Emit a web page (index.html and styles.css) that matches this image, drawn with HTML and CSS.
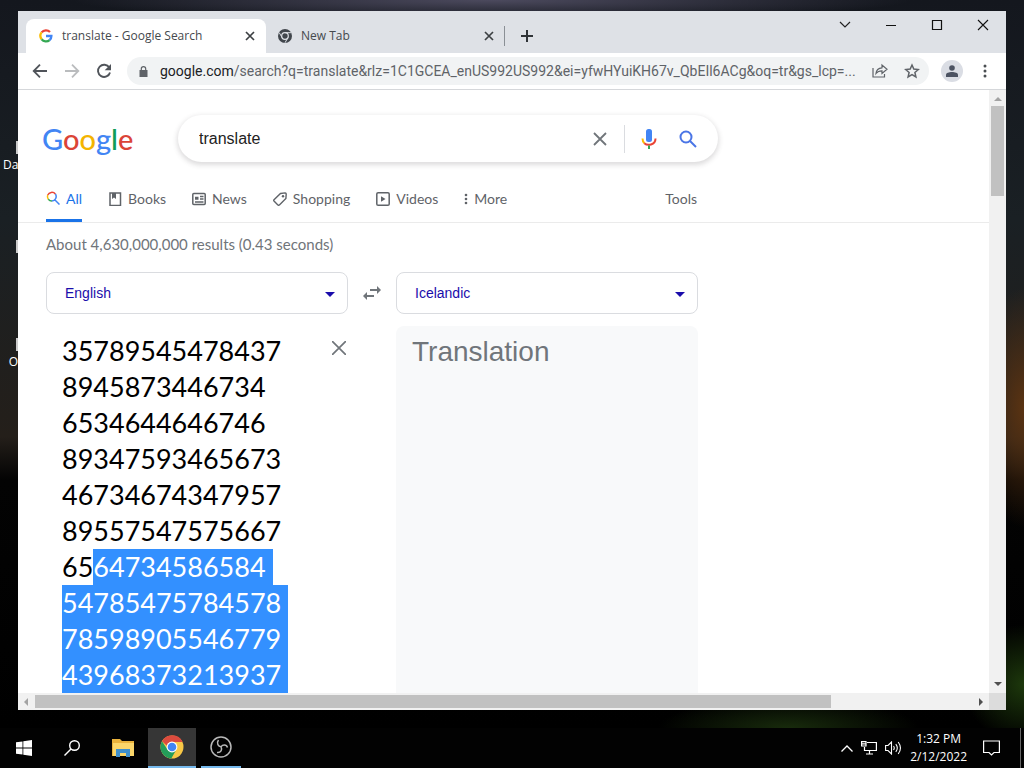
FILE: index.html
```html
<!DOCTYPE html>
<html lang="en">
<head>
<meta charset="utf-8">
<title>translate - Google Search</title>
<link rel="stylesheet" href="styles.css">
</head>
<body>
<main class="desktop">
  <span class="shortcut shortcut-a">Da</span>
  <span class="shortcut shortcut-b"></span>
  <span class="shortcut shortcut-c">O</span>

  <section class="window">
    <header class="tabstrip">
      <div class="tab tab-active">
        <svg class="favicon" viewBox="0 0 14 14" fill="none" stroke-width="2.3"><path d="M2.6 3.4A5.6 5.6 0 0 1 11 3" stroke="#ea4335"/><path d="M2.6 10.2A5.6 5.6 0 0 1 2.6 3.4" stroke="#fbbc05"/><path d="M2.6 10.2A5.6 5.6 0 0 0 10.6 11.1" stroke="#34a853"/><path d="M7 7H12.4A5.5 5.5 0 0 1 10.6 11.1" stroke="#4285f4"/></svg>
        <span class="tab-title">translate - Google Search</span>
        <button class="tab-close" aria-label="Close tab"><svg viewBox="0 0 10 10"><path d="M1 1l8 8M9 1L1 9" stroke="#3c4043" stroke-width="1.7"/></svg></button>
      </div>
      <div class="tab">
        <svg class="favicon" viewBox="0 0 14 14"><circle cx="7" cy="7" r="7" fill="#41464c"/><circle cx="7" cy="7" r="3.3" fill="none" stroke="#dee1e6" stroke-width="1.2"/><path d="M7 3.7H13M4.1 8.6L1.2 3.6M9.9 8.6L7 13.8" stroke="#dee1e6" stroke-width="1"/></svg>
        <span class="tab-title">New Tab</span>
        <button class="tab-close" aria-label="Close tab"><svg viewBox="0 0 10 10"><path d="M1 1l8 8M9 1L1 9" stroke="#3c4043" stroke-width="1.7"/></svg></button>
      </div>
      <button class="new-tab" aria-label="New tab"><svg viewBox="0 0 12 12"><path d="M6 0v12M0 6h12" stroke="#2f3337" stroke-width="2"/></svg></button>
      <div class="caption">
        <button aria-label="Search tabs"><svg viewBox="0 0 12 12"><path d="M1 3l5 5 5-5" fill="none" stroke="#222" stroke-width="1.2"/></svg></button>
        <button aria-label="Minimize"><svg viewBox="0 0 12 12"><path d="M1 6.5h10" stroke="#111"/></svg></button>
        <button aria-label="Maximize"><svg viewBox="0 0 12 12"><path d="M1.5 1.5h9v9h-9z" fill="none" stroke="#111" stroke-width="1.2"/></svg></button>
        <button aria-label="Close"><svg viewBox="0 0 12 12"><path d="M1 1l10 10M11 1L1 11" stroke="#111" stroke-width="1.1"/></svg></button>
      </div>
    </header>

    <div class="toolbar">
      <button class="nav" aria-label="Back"><svg viewBox="0 0 16 16"><path d="M15 8H2M8 1.7L1.7 8 8 14.3" fill="none" stroke="#50545a" stroke-width="1.8"/></svg></button>
      <button class="nav" aria-label="Forward"><svg viewBox="0 0 16 16"><path d="M1 8h13M8 1.7L14.3 8 8 14.3" fill="none" stroke="#babcbe" stroke-width="1.8"/></svg></button>
      <button class="nav" aria-label="Reload"><svg viewBox="0 0 16 16"><path d="M13.3 4.6A6.1 6.1 0 1 0 14 9.4" fill="none" stroke="#50545a" stroke-width="1.9"/><path d="M15 1v6.3H8.7z" fill="#50545a"/></svg></button>
      <div class="omnibox">
        <svg class="lock" viewBox="0 0 8 11"><path d="M0 4h8v7H0z" fill="#5f6368"/><path d="M1.8 4V2.8a2.2 2.2 0 0 1 4.4 0V4" fill="none" stroke="#5f6368" stroke-width="1.2"/></svg>
        <span class="url"><b>google.com</b>/search?q=translate&amp;rlz=1C1GCEA_enUS992US992&amp;ei=yfwHYuiKH67v_QbEIl6ACg&amp;oq=tr&amp;gs_lcp=...</span>
        <button aria-label="Share"><svg viewBox="0 0 16 16" fill="none" stroke="#5f6368" stroke-width="1.2"><path d="M1 5v9h11.5v-3"/><path d="M4 10.5C4.3 6.7 6.5 5 10 4.8V2l5 4.3-5 4.2V7.8C7.4 7.8 5.5 8.5 4 10.5z"/></svg></button>
        <button aria-label="Bookmark"><svg viewBox="0 0 16 16"><path d="M8 2l1.8 4.1 4.5.4-3.4 3 1 4.4L8 11.6l-3.9 2.3 1-4.4-3.4-3 4.5-.4z" fill="none" stroke="#5f6368" stroke-width="1.5"/></svg></button>
      </div>
      <button class="avatar" aria-label="Profile"><svg viewBox="0 0 12 12"><circle cx="6" cy="3" r="2.8" fill="#4c5362"/><path d="M0 12V9.8C0 7.9 3 7 6 7s6 .9 6 2.8V12z" fill="#4c5362"/></svg></button>
      <button class="menu" aria-label="Menu"><svg viewBox="0 0 4 14" fill="#4a4e52"><circle cx="2" cy="2" r="1.5"/><circle cx="2" cy="7" r="1.5"/><circle cx="2" cy="12" r="1.5"/></svg></button>
    </div>

    <div class="viewport">
      <div class="page">
        <div class="search-row">
          <a class="logo" href="#"><span class="c-blue">G</span><span class="c-red">o</span><span class="c-yellow">o</span><span class="c-blue">g</span><span class="c-green">l</span><span class="c-red">e</span></a>
          <form class="search" onsubmit="return false">
            <input type="text" value="translate" aria-label="Search">
            <button class="clear" type="button" aria-label="Clear"><svg viewBox="0 0 14 14"><path d="M1 1l12 12M13 1L1 13" stroke="#70757a" stroke-width="1.8"/></svg></button>
            <button class="mic" type="button" aria-label="Search by voice"><svg viewBox="0 0 16 20"><rect x="5" y="0" width="6" height="13" rx="2.5" fill="#4285f4"/><path d="M1.5 9.5c0 2 .8 3.7 2 4.8" stroke="#fbbc04" stroke-width="2" fill="none"/><path d="M3.3 14.2c3 2.7 11.2 2.3 11.2-4.7" stroke="#ea4335" stroke-width="2" fill="none"/><path d="M8 16.5V20" stroke="#34a853" stroke-width="2"/></svg></button>
            <button class="go" type="submit" aria-label="Search"><svg viewBox="0 0 18 18" fill="none" stroke="#4a75e6" stroke-width="2"><circle cx="7" cy="7" r="5.5"/><path d="M11 11l6 6"/></svg></button>
          </form>
        </div>

        <nav class="modes">
          <a class="mode mode-on" href="#"><svg viewBox="0 0 14 14" fill="none" stroke-width="1.5"><path d="M1.7 4A4.6 4.6 0 0 1 9.4 3" stroke="#ea4335"/><path d="M2.3 8.3A4.6 4.6 0 0 1 1.7 4" stroke="#fbbc04"/><path d="M2.3 8.3A4.6 4.6 0 0 0 6 10.1" stroke="#34a853"/><path d="M9.4 3A4.6 4.6 0 0 1 6 10.1M9 9l4.5 4.5" stroke="#4285f4"/></svg>All</a>
          <a class="mode" href="#"><svg viewBox="0 0 14 14"><path d="M2 1h10.5v12.5H2z" fill="none" stroke="#5f6368" stroke-width="1.5"/><path d="M4 1h4v6L6 5.5 4 7z" fill="#5f6368"/></svg>Books</a>
          <a class="mode" href="#"><svg viewBox="0 0 14 14" fill="none" stroke="#5f6368" stroke-width="1.5"><rect x=".8" y="1.5" width="12.4" height="11" rx="1"/><path d="M3 5.500h3.500M3 7h3.500M8 4.500h3.500M8 7h3.500M3 10h8.500" stroke-width="1.4"/></svg>News</a>
          <a class="mode" href="#"><svg viewBox="0 0 14 14"><path d="M7.500 1.500L12.200.9Q13.200.9 13.200 2L12.900 6.500 6.400 13Q5.600 13.600 4.900 13L1 9Q.4 8.300 1 7.700z" fill="none" stroke="#5f6368" stroke-width="1.4"/><circle cx="10" cy="4.200" r="1.200" fill="#5f6368"/></svg>Shopping</a>
          <a class="mode" href="#"><svg viewBox="0 0 14 14"><rect x=".8" y=".8" width="12.4" height="12.4" rx="1.3" fill="none" stroke="#5f6368" stroke-width="1.5"/><path d="M5 4.200v5.600L9.500 7z" fill="#5f6368"/></svg>Videos</a>
          <a class="mode mode-more" href="#"><svg viewBox="0 0 4 12" fill="#5f6368"><circle cx="2" cy="2" r="1.3"/><circle cx="2" cy="6" r="1.3"/><circle cx="2" cy="10" r="1.3"/></svg>More</a>
          <a class="mode mode-tools" href="#">Tools</a>
        </nav>

        <p class="stats">About 4,630,000,000 results (0.43 seconds)</p>

        <div class="translate">
          <div class="picker">
            <select aria-label="Source language"><option>English</option></select>
            <svg viewBox="0 0 10 5"><path d="M0 0h10L5 5z" fill="#1a0dab"/></svg>
          </div>
          <button class="swap" aria-label="Swap languages"><svg viewBox="0 0 18 14" fill="#70757a"><path d="M7 3h7V0l4 4-4 4V5H7zM11 9H4V6l-4 4 4 4v-3h7z"/></svg></button>
          <div class="picker">
            <select aria-label="Target language"><option>Icelandic</option></select>
            <svg viewBox="0 0 10 5"><path d="M0 0h10L5 5z" fill="#1a0dab"/></svg>
          </div>
          <div class="source">
            <textarea id="source" aria-label="Source text" spellcheck="false">35789545478437
8945873446734
6534644646746
89347593465673
46734674347957
89557547575667
6564734586584
54785475784578
78598905546779
43968373213937 </textarea>
            <button class="wipe" aria-label="Clear source text"><svg viewBox="0 0 14 14"><path d="M0 0l14 14M14 0L0 14" stroke="#70757a" stroke-width="1.7"/></svg></button>
          </div>
          <div class="target">Translation</div>
        </div>
      </div>

      <div class="vbar"><svg class="arrow" viewBox="0 0 8 4"><path d="M0 4h8L4 0z" fill="#a3a3a3"/></svg><i class="vthumb"></i><svg class="arrow arrow-end" viewBox="0 0 8 4"><path d="M0 0h8L4 4z" fill="#505050"/></svg></div>
      <div class="hbar"><svg class="arrow-h" viewBox="0 0 4 8"><path d="M4 0v8L0 4z" fill="#a3a3a3"/></svg><i class="hthumb"></i><svg class="arrow-h arrow-h-end" viewBox="0 0 4 8"><path d="M0 0v8l4-4z" fill="#505050"/></svg></div>
      <div class="corner"></div>
    </div>
  </section>
</main>

<footer class="taskbar">
  <button class="task" aria-label="Start"><svg width="16" height="16" viewBox="0 0 16 16" fill="#fff"><path d="M0 2.300L6.500 1.400v6.200H0zM7.300 1.300L16 0v7.600H7.300zM0 8.400h6.500v6.200L0 13.700zM7.300 8.400H16V16l-8.700-1.300z"/></svg></button>
  <button class="task" aria-label="Search"><svg width="16" height="16" viewBox="0 0 16 16" fill="none" stroke="#fff" stroke-width="1.4"><circle cx="10.5" cy="5.5" r="4.8"/><path d="M7 9L.5 15.5"/></svg></button>
  <button class="task task-wide" aria-label="File Explorer"><svg width="22" height="18" viewBox="0 0 22 18"><path d="M0 0h8l2 2h12v15H0z" fill="#e9b23c"/><path d="M1 4h21v13H1z" fill="#fbd66a"/><path d="M4 10h14v8h-4v-4H8v4H4z" fill="#3f8fcb"/></svg></button>
  <button class="task task-current" aria-label="Google Chrome"><svg width="24" height="24" viewBox="0 0 24 24"><circle cx="12" cy="12" r="11.5" fill="#f9c846"/><path d="M2 6.300A11.500 11.500 0 0 1 22.700 7H12a5 5 0 0 0-4.800 4z" fill="#dc4b3e"/><path d="M2 6.300A11.500 11.500 0 0 0 11.300 23.500L16.400 14.500 12 17 7.700 15z" fill="#249d5a"/><circle cx="12" cy="12" r="5.4" fill="#fff"/><circle cx="12" cy="12" r="4.3" fill="#4285f4"/></svg></button>
  <button class="task task-open" aria-label="OBS Studio"><svg width="22" height="22" viewBox="0 0 22 22" fill="none" stroke="#b8b8b8" stroke-width="1.5"><circle cx="11" cy="11" r="10"/><path d="M8.500 4C6 7.500 8.500 10.500 11 10.800M17.500 11.500C16.500 8 12.500 8.500 11 10.800M7 16.500C11 17 12.500 13.500 11 10.800"/></svg></button>
  <div class="tray">
    <svg width="12" height="7" viewBox="0 0 12 7"><path d="M.5 6.500L6 1l5.500 5.500" fill="none" stroke="#fff" stroke-width="1.3"/></svg>
    <svg width="16" height="14" viewBox="0 0 16 14" fill="none" stroke="#fff" stroke-width="1.2"><path d="M6 1.500h9.400v8H3.500V6M5 13h7M8.500 9.500V13M.6.600h4.400v4.400H.600zM1 2.800h4"/></svg>
    <svg width="17" height="14" viewBox="0 0 17 14" fill="none" stroke="#fff" stroke-width="1.1"><path d="M.6 4.500h2.400l3.500-3.500v12L3 9.500H.6zM8.500 5q1.500 2 0 4M10.800 3.200q3 3.800 0 7.600M13.200 1q4.500 6 0 12"/></svg>
    <time class="clock">1:32 PM<br>2/12/2022</time>
    <svg width="17" height="17" viewBox="0 0 17 17" fill="none" stroke="#fff" stroke-width="1.2"><path d="M.6 1h15.800v11.500H11L8.500 15 6 12.500H.6z"/></svg>
  </div>
</footer>
<script src="select.js"></script>
</body>
</html>
```
FILE: select.js
```js
const source = document.getElementById("source");
const start = source.value.indexOf("64734586584");
source.focus({ preventScroll: true });
source.setSelectionRange(start, source.value.length, "backward");
source.scrollTop = 0;
```
FILE: styles.css
```css
* { box-sizing: border-box; }
html, body { height: 100%; margin: 0; }
body {
  display: flex;
  flex-direction: column;
  overflow: hidden;
  background: #000;
  font-family: Lato, "Liberation Sans", sans-serif;
  font-size: 14px;
}
button {
  display: flex;
  align-items: center;
  justify-content: center;
  padding: 0;
  border: 0;
  background: none;
}
svg { flex: none; display: block; }
a { color: inherit; text-decoration: none; }

.desktop {
  position: relative;
  flex: 1;
  min-height: 0;
  display: flex;
  padding: 11px 18px 18px;
  background:
    radial-gradient(ellipse 60px 60px at 100% 94%, #1d380c, transparent),
    radial-gradient(ellipse 130px 30px at 77% 100%, #182b0c, transparent),
    radial-gradient(ellipse 420px 20px at 48% 0, #4c4a5e, transparent),
    radial-gradient(ellipse 50px 120px at 100% 56%, #5a3312, transparent),
    linear-gradient(#14171e, #1a2024 30%, #241f1a 60%, #030303 66%, #000);
}
.shortcut {
  position: absolute;
  left: 3px;
  width: 15px;
  height: 34px;
  padding-top: 16px;
  color: #fff;
  font: 12px/16px "Open Sans", sans-serif;
  text-align: right;
  background: linear-gradient(#ccc, #ccc) right top / 2px 13px no-repeat;
}
.shortcut-a { top: 141px; }
.shortcut-b { top: 240px; }
.shortcut-c { top: 338px; }

.window {
  position: relative;
  flex: 1;
  min-width: 0;
  display: flex;
  flex-direction: column;
  background: #fff;
}

.tabstrip {
  display: flex;
  height: 42px;
  padding: 8px 0 0 8px;
  background: #dee1e6;
  font: 12px/16px "Open Sans", "Noto Sans", sans-serif;
  color: #45494d;
}
.tab {
  display: flex;
  align-items: center;
  gap: 9px;
  width: 240px;
  padding: 0 11px 0 13px;
}
.tab-active { background: #fff; border-radius: 8px 8px 0 0; }
.tab + .tab { padding: 0 12px; }
.favicon { width: 14px; height: 14px; }
.tab-title { flex: 1; white-space: nowrap; }
.tab-close svg { width: 10px; height: 10px; }
.new-tab {
  align-self: center;
  width: 44px;
  height: 20px;
  margin-left: -2px;
  border-left: 1px solid #8a8f95;
}
.new-tab svg { width: 12px; height: 12px; }
.caption { display: flex; margin: -8px 0 0 auto; height: 28px; }
.caption button { width: 46px; }
.caption svg { width: 12px; height: 12px; }

.toolbar {
  display: flex;
  align-items: center;
  height: 37px;
  padding: 0 14px;
  border-bottom: 1px solid #d5d7da;
}
.nav { width: 16px; height: 16px; margin-right: 16px; }
.nav svg { width: 16px; height: 16px; }
.omnibox {
  flex: 1;
  min-width: 0;
  display: flex;
  align-items: center;
  gap: 16px;
  height: 28px;
  padding: 0 9px 0 12px;
  margin: 0 12px 0 -1px;
  border-radius: 14px;
  background: #f1f3f4;
  color: #5f6368;
}
.lock { width: 9px; height: 11px; margin-right: -4px; }
.url {
  flex: 1;
  min-width: 0;
  font: 14px/20px Roboto, sans-serif;
  white-space: nowrap;
}
.url b { font-weight: 400; color: #202124; }
.omnibox button svg { width: 16px; height: 16px; }
.avatar {
  width: 22px;
  height: 22px;
  border-radius: 50%;
  background: #dadde4;
}
.avatar svg { width: 12px; height: 12px; }
.menu { width: 15px; margin-left: 14px; }
.menu svg { width: 4px; height: 14px; }

.viewport {
  flex: 1;
  min-height: 0;
  display: grid;
  grid-template: minmax(0, 1fr) 17px / minmax(0, 1fr) 17px;
}
.page { overflow: hidden; display: flex; flex-direction: column; color: #5f6368; }

.search-row { display: flex; height: 72px; padding: 25px 0 0 24px; }
.logo {
  width: 136px;
  font-size: 29px;
  font-weight: 500;
  line-height: 48px;
}
.c-blue { color: #4285f4; }
.c-red { color: #db4437; }
.c-yellow { color: #f4b400; }
.c-green { color: #0f9d58; }
.search {
  display: flex;
  align-items: center;
  width: 540px;
  height: 47px;
  padding: 0 21px 0 20px;
  border-radius: 24px;
  box-shadow: 0 2px 5px 1px rgba(64, 60, 67, .18);
}
.search input {
  flex: 1;
  min-width: 0;
  padding: 0 0 0 1px;
  border: 0;
  outline: 0;
  background: none;
  color: #222;
  font: 16px/24px "Liberation Sans", sans-serif;
}
.clear svg { width: 14px; height: 14px; }
.mic { width: 49px; height: 28px; margin-left: 17px; border-left: 1px solid #dadce0; }
.mic svg { width: 16px; height: 20px; }
.go svg { width: 18px; height: 18px; margin-left: 6px; }

.modes {
  display: flex;
  height: 61px;
  padding: 15px 0 0 28px;
  gap: 26px;
  border-bottom: 1px solid #ebebeb;
}
.mode {
  display: flex;
  align-items: center;
  gap: 6px;
  height: 45px;
  padding-bottom: 2px;
  white-space: nowrap;
}
.mode svg { width: 14px; height: 14px; }
.mode-on { padding: 0; color: #1a73e8; border-bottom: 3px solid #1a73e8; }
.mode-more svg { width: 4px; height: 12px; }
.mode-tools { margin-left: 132px; }

.stats {
  margin: 11px 28px 18px;
  color: #70757a;
  font-size: 15px;
  line-height: 20px;
}

.translate {
  flex: 1;
  min-height: 0;
  display: grid;
  grid-template: 42px minmax(0, 1fr) / 302px 48px 302px;
  row-gap: 12px;
  padding-left: 28px;
}
.picker { position: relative; }
.picker select {
  appearance: none;
  width: 100%;
  height: 42px;
  padding: 0 18px;
  border: 1px solid #dadce0;
  border-radius: 8px;
  background: #fff;
  color: #1a0dab;
  font: 14px/20px "Liberation Sans", sans-serif;
}
.picker svg {
  position: absolute;
  right: 13px;
  top: 20px;
  width: 10px;
  height: 5px;
  pointer-events: none;
}
.swap svg { width: 18px; height: 14px; }
.source {
  display: flex;
  align-items: flex-start;
  padding: 7px 2px 0 16px;
}
.source textarea {
  flex: 1;
  min-width: 0;
  height: 360px;
  padding: 0;
  border: 0;
  outline: 0;
  resize: none;
  overflow: hidden;
  background: none;
  color: #000;
  font: 27px/36px Lato, sans-serif;
  white-space: pre;
}
.source textarea::selection { background: #3390ff; color: #fff; }
.wipe { margin-top: 8px; }
.wipe svg { width: 14px; height: 14px; }
.target {
  grid-column: 3;
  padding: 8px 16px;
  border-radius: 8px 8px 0 0;
  background: #f8f9fa;
  color: #70757a;
  font: 28px/36px "Liberation Sans", sans-serif;
}

.vbar {
  display: flex;
  flex-direction: column;
  align-items: center;
  padding: 7px 2px;
  background: #f1f1f1;
}
.arrow { width: 8px; height: 4px; }
.arrow-end { margin-top: auto; }
.vthumb { width: 13px; height: 90px; margin-top: 5px; background: #c1c1c1; }
.hbar {
  display: flex;
  align-items: center;
  padding: 2px 6px;
  background: #f1f1f1;
}
.arrow-h { width: 4px; height: 8px; }
.arrow-h-end { margin-left: auto; }
.hthumb { width: 83%; height: 13px; margin-left: 7px; background: #c1c1c1; }
.corner { background: #dcdcdc; }

.taskbar {
  display: flex;
  height: 40px;
  background: #020202;
  color: #fff;
}
.task { width: 48px; }
.task-wide { width: 52px; padding-left: 2px; }
.task-current { background: #363636; border-bottom: 2px solid #76b9ed; }
.task-open { width: 40px; margin-left: 5px; border-bottom: 2px solid #76b9ed; }
.tray {
  display: flex;
  align-items: center;
  gap: 8px;
  margin: 0 3px 0 auto;
  padding-right: 20px;
  border-right: 1px solid #666;
}
.clock {
  margin-right: 8px;
  font: 12px/18px "Open Sans", sans-serif;
  text-align: center;
}
```
